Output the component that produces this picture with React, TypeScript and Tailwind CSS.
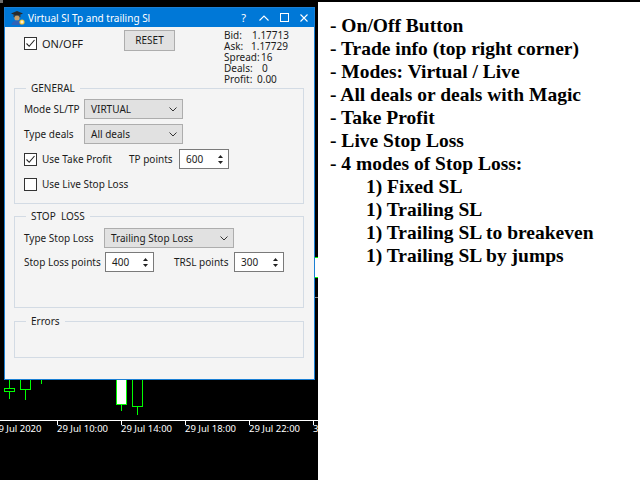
import React from "react";

function Check({ checked }: { checked: boolean }) {
  return (
    <div className="w-[13px] h-[13px] border border-[#333333] bg-white flex items-center justify-center shrink-0">
      {checked && (
        <svg width="11" height="11" viewBox="0 0 11 11">
          <path d="M1.5 5.5 L4.2 8.3 L9.5 2" fill="none" stroke="#222" strokeWidth="1.1" />
        </svg>
      )}
    </div>
  );
}

function Combo({ value, w }: { value: string; w: string }) {
  return (
    <div className={`${w} h-[20px] bg-[#e1e1e1] border border-[#adadad] flex items-center pl-[6px] pr-[5px]`}>
      <span className="flex-1">{value}</span>
      <svg width="8" height="5" viewBox="0 0 8 5">
        <path d="M0.5 0.5 L4 4 L7.5 0.5" fill="none" stroke="#333" strokeWidth="1" />
      </svg>
    </div>
  );
}

function Spin({ value, w }: { value: string; w: string }) {
  return (
    <div className={`${w} h-[20px] bg-white border border-[#7a7a7a] flex items-center pl-[6px] pr-[5px]`}>
      <span className="flex-1">{value}</span>
      <svg width="5" height="11" viewBox="0 0 5 11">
        <path d="M2.5 1 L5 4 L0 4 Z" fill="#222" />
        <path d="M0 7 L5 7 L2.5 10 Z" fill="#222" />
      </svg>
    </div>
  );
}

function Group({ title, className, children }: { title: string; className: string; children?: React.ReactNode }) {
  return (
    <div className={`relative ml-[9px] w-[290px] border border-[#d3dbe4] ${className}`}>
      <span className="absolute left-[11px] -top-[7px] px-[5px] bg-[#f4f4f4] leading-[12px]">{title}</span>
      {children}
    </div>
  );
}

function Candle({ x, top, bottom, wickTop, wickBottom, filled }: { x: number; top: number; bottom: number; wickTop: number; wickBottom: number; filled?: boolean }) {
  return (
    <>
      <div className="absolute w-px bg-[#00ff00]" style={{ left: x + 5, top: wickTop, height: wickBottom - wickTop }} />
      <div
        className={`absolute w-[11px] border border-[#00ff00] ${filled ? "bg-white" : "bg-black"}`}
        style={{ left: x, top, height: bottom - top }}
      />
    </>
  );
}

export default function App() {
  const ticks = [57, 121, 185, 249, 313];
  const labels = [
    { x: -7, t: "29 Jul 2020" },
    { x: 57, t: "29 Jul 10:00" },
    { x: 121, t: "29 Jul 14:00" },
    { x: 185, t: "29 Jul 18:00" },
    { x: 249, t: "29 Jul 22:00" },
    { x: 313, t: "30 Jul 02:00" },
  ];
  return (
    <div className="w-[640px] h-[480px] flex bg-white overflow-hidden">
      <div className="relative w-[318px] h-[480px] bg-black overflow-hidden shrink-0 font-['Noto_Sans',sans-serif]">
        <div className="absolute left-0 top-0 w-[3px] h-[3px] bg-[#707070]" />
        {/* candles behind dialog */}
        <Candle x={4} top={388} bottom={392} wickTop={370} wickBottom={399} />
        <Candle x={20} top={360} bottom={390} wickTop={360} wickBottom={400} />
        <div className="absolute left-[41px] top-[370px] w-px h-[14px] bg-[#00ff00]" />
        <Candle x={116} top={360} bottom={405} wickTop={360} wickBottom={411} filled />
        <Candle x={132} top={360} bottom={407} wickTop={360} wickBottom={415} />
        <div className="absolute left-[313px] top-[257px] w-[11px] h-[21px] border border-[#00ff00] bg-white" />
        <div className="absolute left-[313px] top-[297px] w-[10px] h-px bg-[#8a8a8a]" />
        {/* axis */}
        <div className="absolute left-0 top-[420px] w-full h-px bg-white" />
        {ticks.map((x) => (
          <div key={x} className="absolute top-[420px] w-px h-[5px] bg-white" style={{ left: x }} />
        ))}
        {labels.map((l) => (
          <div key={l.t} className="absolute top-[422px] text-white text-[9.5px] leading-[14px] whitespace-nowrap" style={{ left: l.x }}>
            {l.t}
          </div>
        ))}

        {/* dialog */}
        <div className="absolute left-[4px] top-[7px] w-[311px] h-[373px] border border-[#1a7fd4] bg-[#f4f4f4] flex flex-col text-[10px] text-[#1b1b1b]">
          <div className="h-[19px] bg-[#0078d7] flex items-center text-white shrink-0">
            <svg className="ml-[5px]" width="15" height="15" viewBox="0 0 15 15">
              <path d="M7 1 L13 3.5 L7 6 L1 3.5 Z" fill="#2a2a2a" />
              <path d="M3.5 4.5 L3.5 7 Q7 9 10.5 7 L10.5 4.5 L7 6 Z" fill="#3c3c3c" />
              <circle cx="7" cy="8" r="2.6" fill="#c9a06a" />
              <path d="M1.5 15 Q2 10.5 7 10.5 Q12 10.5 12.5 15 Z" fill="#2f63b8" />
              <circle cx="12" cy="12" r="2.6" fill="#f2c530" />
              <path d="M12 10.4 L12 13.6 M10.4 12 L13.6 12" stroke="#fff" strokeWidth="1" />
            </svg>
            <span className="ml-[3px] leading-[12px]">Virtual Sl Tp and trailing Sl</span>
            <span className="ml-auto mr-[4px] text-[11px] leading-[12px]">?</span>
            <svg className="ml-[9px]" width="10" height="6" viewBox="0 0 10 6">
              <path d="M0.5 5.5 L5 1 L9.5 5.5" fill="none" stroke="#fff" strokeWidth="1.1" />
            </svg>
            <svg className="ml-[11px]" width="9" height="9" viewBox="0 0 9 9">
              <rect x="0.5" y="0.5" width="8" height="8" fill="none" stroke="#fff" strokeWidth="1" />
            </svg>
            <svg className="ml-[11px] mr-[6px]" width="8" height="8" viewBox="0 0 8 8">
              <path d="M0.5 0.5 L7.5 7.5 M7.5 0.5 L0.5 7.5" stroke="#fff" strokeWidth="1.1" />
            </svg>
          </div>

          {/* top row */}
          <div className="h-[61px] flex items-start pl-[19px] shrink-0">
            <div className="w-[100px] mt-[10px] flex items-center gap-[5px]">
              <Check checked />
              <span className="text-[11px] leading-[13px]">ON/OFF</span>
            </div>
            <div className="mt-[3px] w-[51px] h-[21px] bg-[#e1e1e1] border border-[#adadad] flex items-center justify-center">
              RESET
            </div>
            <div className="ml-[49px] mt-[3px] leading-[11px]">
              <div><span className="inline-block w-[28px]">Bid:</span>1.17713</div>
              <div><span className="inline-block w-[27px]">Ask:</span>1.17729</div>
              <div><span className="inline-block w-[37px]">Spread:</span>16</div>
              <div><span className="inline-block w-[38px]">Deals:</span>0</div>
              <div><span className="inline-block w-[33px]">Profit:</span>0.00</div>
            </div>
          </div>

          <Group title="GENERAL" className="h-[116px] pt-[10px] pl-[9px] flex flex-col gap-[5px]">
            <div className="h-[20px] flex items-center">
              <span className="w-[60px]">Mode SL/TP</span>
              <Combo value="VIRTUAL" w="w-[99px]" />
            </div>
            <div className="h-[20px] flex items-center">
              <span className="w-[60px]">Type deals</span>
              <Combo value="All deals" w="w-[99px]" />
            </div>
            <div className="h-[20px] flex items-center">
              <Check checked />
              <span className="ml-[5px] w-[87px]">Use Take Profit</span>
              <span className="w-[50px]">TP points</span>
              <Spin value="600" w="w-[50px]" />
            </div>
            <div className="h-[20px] flex items-center">
              <Check checked={false} />
              <span className="ml-[5px]">Use Live Stop Loss</span>
            </div>
          </Group>

          <Group title="STOP  LOSS" className="mt-[12px] h-[92px] pt-[11px] pl-[9px] flex flex-col gap-[4px] whitespace-pre">
            <div className="h-[20px] flex items-center">
              <span className="w-[80px]">Type Stop Loss</span>
              <Combo value="Trailing Stop Loss" w="w-[130px]" />
            </div>
            <div className="h-[20px] flex items-center">
              <span className="w-[81px]">Stop Loss points</span>
              <Spin value="400" w="w-[49px]" />
              <span className="ml-[20px] w-[60px]">TRSL points</span>
              <Spin value="300" w="w-[50px]" />
            </div>
          </Group>

          <Group title="Errors" className="mt-[13px] h-[37px]" />
        </div>
      </div>

      <div className="flex-1 h-[480px] border-t-2 border-black pt-[12px] pl-[12px] font-['Liberation_Serif',serif] font-bold text-[19.5px] leading-[23px] text-black whitespace-pre">
        <div>- On/Off Button</div>
        <div>- Trade info (top right corner)</div>
        <div>- Modes: Virtual / Live</div>
        <div>- All deals or deals with Magic</div>
        <div>- Take Profit</div>
        <div>- Live Stop Loss</div>
        <div>- 4 modes of Stop Loss:</div>
        <div className="pl-[36px]">1) Fixed SL</div>
        <div className="pl-[36px]">1) Trailing SL</div>
        <div className="pl-[36px]">1) Trailing SL to breakeven</div>
        <div className="pl-[36px]">1) Trailing SL by jumps</div>
      </div>
    </div>
  );
}
